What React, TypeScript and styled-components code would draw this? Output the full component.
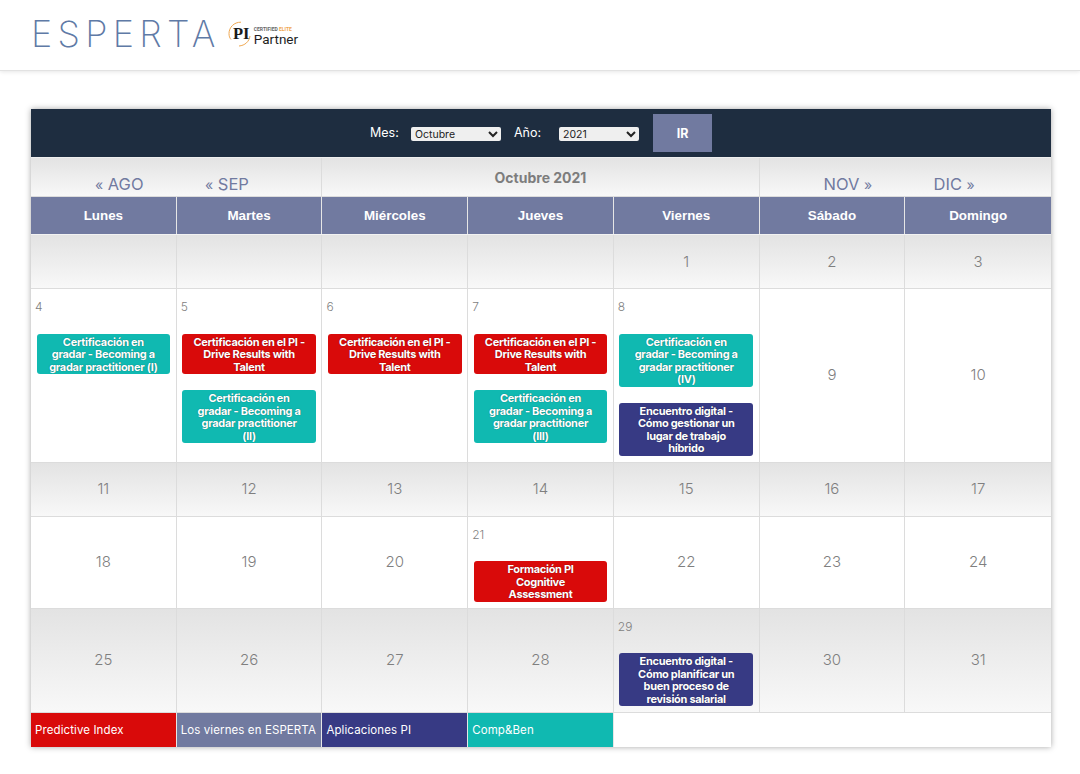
import { FC } from "react";
import styled, { createGlobalStyle, css } from "styled-components";

const RED = "#d90a0a";
const TEAL = "#10b9b1";
const NAVY = "#373a84";
const SLATE = "#717aa0";
const LINE = "#dcdcdc";

type CalendarEvent = { title: string; color: string };
type Day = { day?: number; events?: CalendarEvent[] };

const cert = (suffix: string): CalendarEvent => ({
  title: `Certificación en\ngradar - Becoming a\ngradar practitioner ${suffix}`,
  color: TEAL,
});
const drive: CalendarEvent = {
  title: "Certificación en el PI -\nDrive Results with\nTalent",
  color: RED,
};

const weekdays = ["Lunes", "Martes", "Miércoles", "Jueves", "Viernes", "Sábado", "Domingo"];

const weeks: Day[][] = [
  [{}, {}, {}, {}, { day: 1 }, { day: 2 }, { day: 3 }],
  [
    { day: 4, events: [cert("(I)")] },
    { day: 5, events: [drive, cert("\n(II)")] },
    { day: 6, events: [drive] },
    { day: 7, events: [drive, cert("\n(III)")] },
    {
      day: 8,
      events: [
        cert("\n(IV)"),
        { title: "Encuentro digital -\nCómo gestionar un\nlugar de trabajo\nhíbrido", color: NAVY },
      ],
    },
    { day: 9 },
    { day: 10 },
  ],
  [{ day: 11 }, { day: 12 }, { day: 13 }, { day: 14 }, { day: 15 }, { day: 16 }, { day: 17 }],
  [
    { day: 18 },
    { day: 19 },
    { day: 20 },
    { day: 21, events: [{ title: "Formación PI\nCognitive\nAssessment", color: RED }] },
    { day: 22 },
    { day: 23 },
    { day: 24 },
  ],
  [
    { day: 25 },
    { day: 26 },
    { day: 27 },
    { day: 28 },
    {
      day: 29,
      events: [
        { title: "Encuentro digital -\nCómo planificar un\nbuen proceso de\nrevisión salarial", color: NAVY },
      ],
    },
    { day: 30 },
    { day: 31 },
  ],
];

const legend = [
  { label: "Predictive Index", color: RED },
  { label: "Los viernes en ESPERTA", color: SLATE },
  { label: "Aplicaciones PI", color: NAVY },
  { label: "Comp&Ben", color: TEAL },
];

const App: FC = () => {
  return (
    <>
      <GlobalStyle />
      <Header>
        <Wordmark>ESPERTA</Wordmark>
        <PartnerBadge>
          <svg width="24" height="26" viewBox="0 0 24 26" aria-hidden="true">
            <path d="M13 1.200C6 1 1 6.500 1 12.500c0 2.500.7 4.500 2 6" fill="none" stroke="#f0a850" strokeWidth="1" />
            <path d="M22 15c-.8 5.500-5 9.500-11 10" fill="none" stroke="#f0a850" strokeWidth="1" />
            <text x="5" y="18" fontFamily="'Liberation Serif', serif" fontWeight="700" fontSize="16.500" fill="#1a1a1a">
              PI
            </text>
          </svg>
          <PartnerText>
            <PartnerTag>
              CERTIFIED <PartnerElite>ELITE</PartnerElite>
            </PartnerTag>
            <PartnerName>Partner</PartnerName>
          </PartnerText>
        </PartnerBadge>
      </Header>

      <Main>
        <Calendar>
          <Toolbar>
            <FilterLabel $gap={13}>Mes:</FilterLabel>
            <FilterSelect $width={90} $gap={13} defaultValue="Octubre">
              <option>Septiembre</option>
              <option>Octubre</option>
              <option>Noviembre</option>
            </FilterSelect>
            <FilterLabel $gap={17}>Año:</FilterLabel>
            <FilterSelect $width={80} $gap={14} defaultValue="2021">
              <option>2020</option>
              <option>2021</option>
              <option>2022</option>
            </FilterSelect>
            <GoButton type="button">IR</GoButton>
          </Toolbar>

          <MonthNav>
            <NavLinks>
              <NavLink $width={49}><small>«</small> AGO</NavLink>
              <NavLink $width={44}><small>«</small> SEP</NavLink>
            </NavLinks>
            <MonthTitle>Octubre 2021</MonthTitle>
            <NavLinks>
              <NavLink $width={49}>NOV <small>»</small></NavLink>
              <NavLink $width={41}>DIC <small>»</small></NavLink>
            </NavLinks>
          </MonthNav>

          <Weekdays>
            {weekdays.map((name) => (
              <Weekday key={name}>{name}</Weekday>
            ))}
          </Weekdays>

          {weeks.map((week, index) => (
            <Week key={index}>
              {week.map((cell, cellIndex) => (
                <DayCell key={cellIndex} $shaded={index % 2 === 0} $hasEvents={!!cell.events}>
                  {cell.events ? (
                    <>
                      <DayCorner>{cell.day}</DayCorner>
                      <EventList>
                        {cell.events.map((event, eventIndex) => (
                          <EventTag key={eventIndex} $color={event.color}>
                            {event.title}
                          </EventTag>
                        ))}
                      </EventList>
                    </>
                  ) : (
                    <DayNumber>{cell.day}</DayNumber>
                  )}
                </DayCell>
              ))}
            </Week>
          ))}

          <Legend>
            {legend.map((item) => (
              <LegendItem key={item.label} $color={item.color}>
                {item.label}
              </LegendItem>
            ))}
          </Legend>
        </Calendar>
      </Main>
    </>
  );
};

const GlobalStyle = createGlobalStyle`
  html, body {
    margin: 0;
    background: #fff;
    font-family: "Inter", "Liberation Sans", sans-serif;
  }

  * {
    box-sizing: border-box;
  }
`;

const Header = styled.header`
  height: 71px;
  display: flex;
  align-items: center;
  gap: 7px;
  padding: 0 0 3px 31px;
  border-bottom: 1px solid #e2e2e2;
  box-shadow: 0 1px 4px rgba(0, 0, 0, 0.1);
`;

const Wordmark = styled.div`
  font-family: "Inter", sans-serif;
  font-weight: 200;
  font-size: 36px;
  line-height: 1;
  letter-spacing: 5.300px;
  color: #5f7aa6;
`;

const PartnerBadge = styled.div`
  display: flex;
  align-items: center;
  gap: 2px;
  margin-top: 1px;
`;

const PartnerText = styled.div`
  display: flex;
  flex-direction: column;
  padding-top: 3px;
`;

const PartnerTag = styled.span`
  font-family: "Roboto", sans-serif;
  font-size: 5px;
  font-weight: 700;
  line-height: 6px;
  color: #666;
`;

const PartnerElite = styled.span`
  color: #f0a850;
`;

const PartnerName = styled.span`
  font-family: "Roboto", sans-serif;
  font-size: 13.500px;
  line-height: 14px;
  color: #1e1e1e;
`;

const Main = styled.main`
  padding: 38px 29px 27px 31px;
`;

const Calendar = styled.section`
  width: 1020px;
  box-shadow: 0 0 6px rgba(0, 0, 0, 0.35);
`;

const Toolbar = styled.div`
  height: 49px;
  display: flex;
  align-items: center;
  justify-content: center;
  background: #1e2d40;
  border-bottom: 1px solid #eee;
`;

const FilterLabel = styled.label<{ $gap: number }>`
  width: 28px;
  white-space: nowrap;
  font-size: 12.500px;
  color: #fff;
  margin: -2px ${({ $gap }) => $gap}px 0 0;
`;

const FilterSelect = styled.select<{ $width: number; $gap: number }>`
  width: ${({ $width }) => $width}px;
  height: 14px;
  padding: 0;
  margin: 2px ${({ $gap }) => $gap}px 0 0;
  border: 0;
  border-radius: 2px;
  background-color: #efefef;
  font-family: "Inter", sans-serif;
  font-size: 10.500px;
  color: #222;
`;

const GoButton = styled.button`
  width: 59px;
  height: 38px;
  border: 0;
  padding: 0;
  background: ${SLATE};
  color: #fff;
  font-family: "Inter", sans-serif;
  font-size: 12.500px;
  font-weight: 700;
`;

const shaded = css`
  background: linear-gradient(#e3e3e3, #f8f8f8);
`;

const MonthNav = styled.div`
  height: 39px;
  display: grid;
  grid-template-columns: 2fr 3fr 2fr;
  border-bottom: 1px solid ${LINE};
  ${shaded}
`;

const NavLinks = styled.div`
  display: flex;
  align-items: flex-end;
  gap: 61px;
  padding: 0 0 1px 64px;
`;

const NavLink = styled.a<{ $width: number }>`
  width: ${({ $width }) => $width}px;
  white-space: nowrap;
  font-size: 16.500px;
  line-height: 20px;
  color: #717aa0;

  small {
    font-size: 14px;
  }
`;

const MonthTitle = styled.div`
  margin-left: -1px;
  padding-top: 11px;
  text-align: center;
  font-size: 14px;
  font-weight: 700;
  color: #7d7d7d;
  border-left: 1px solid ${LINE};
  border-right: 1px solid ${LINE};
`;

const Weekdays = styled.div`
  display: grid;
  grid-template-columns: repeat(7, 1fr);
  background: ${SLATE};
  border-bottom: 1px solid #f2f2f2;
`;

const Weekday = styled.div`
  height: 37px;
  display: flex;
  align-items: center;
  justify-content: center;
  font-family: "Liberation Sans", sans-serif;
  font-size: 13.400px;
  font-weight: 700;
  color: #fff;
  border-right: 1px solid #e6e6e6;

  &:last-child {
    border-right: 0;
  }
`;

const Week = styled.div`
  display: grid;
  grid-template-columns: repeat(7, 1fr);
  border-bottom: 1px solid ${LINE};
`;

const DayCell = styled.div<{ $shaded: boolean; $hasEvents: boolean }>`
  min-height: 53px;
  display: flex;
  flex-direction: column;
  border-right: 1px solid ${LINE};
  ${({ $shaded }) => $shaded && shaded}
  ${({ $hasEvents }) =>
    $hasEvents
      ? css`
          padding: 0 5.500px 6px;
        `
      : css`
          align-items: center;
          justify-content: center;
        `}

  &:last-child {
    border-right: 0;
  }
`;

const DayNumber = styled.span`
  margin-bottom: 1px;
  font-size: 15px;
  font-weight: 300;
  color: #7f7f7f;
`;

const DayCorner = styled.span`
  height: 44.500px;
  padding-top: 10px;
  margin-left: -1.500px;
  font-size: 12px;
  line-height: 15px;
  font-weight: 300;
  color: #7f7f7f;
`;

const EventList = styled.div`
  display: flex;
  flex-direction: column;
  gap: 16px;
`;

const EventTag = styled.div<{ $color: string }>`
  padding: 2px 0 1px;
  border-radius: 3px;
  background: ${({ $color }) => $color};
  color: #fff;
  font-size: 11px;
  font-weight: 700;
  line-height: 12.500px;
  letter-spacing: -0.3px;
  text-align: center;
  white-space: pre-line;
  text-shadow: 0 0 1px rgba(0, 0, 0, 0.5);
`;

const Legend = styled.div`
  display: grid;
  grid-template-columns: repeat(7, 1fr);
  background: #fff;
`;

const LegendItem = styled.div<{ $color: string }>`
  height: 34px;
  display: flex;
  align-items: center;
  padding-left: 4px;
  background: ${({ $color }) => $color};
  border-right: 1px solid #e6e6e6;
  color: #fff;
  font-size: 11.500px;
  letter-spacing: 0.1px;
  white-space: nowrap;
`;

export default App;
